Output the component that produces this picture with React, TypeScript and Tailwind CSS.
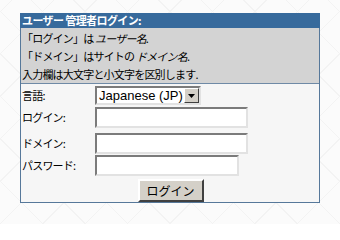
import React from "react";

const jp = "font-['MS_UI_Gothic','Noto_Sans_CJK_JP',sans-serif]";

const inset =
  "border-2 border-t-[#7b7b7b] border-l-[#7b7b7b] border-b-[#e2e2e2] border-r-[#e2e2e2] bg-white";

const Field = ({ label, width, mt }: { label: string; width: string; mt: string }) => (
  <div className={`flex items-center ${mt}`}>
    <label className="w-[73px] shrink-0 text-[11px] tracking-[-0.8px] leading-none text-black">{label}</label>
    <input type="text" className={`${inset} ${width} h-[21px] outline-none px-1 text-[12px]`} />
  </div>
);

const App = () => {
  return (
    <div
      className={`w-[340px] h-[224px] overflow-hidden bg-[#fbfbfb] bg-[repeating-linear-gradient(45deg,#f3f3f3_0px,#f3f3f3_1px,transparent_1px,transparent_30px),repeating-linear-gradient(-45deg,#f3f3f3_0px,#f3f3f3_1px,transparent_1px,transparent_30px)] pt-[13px] pl-[20px] ${jp}`}
    >
      <div className="w-[300px] border border-t-0 border-[#56789a]">
        <div className="h-[15px] -mx-px bg-[#376a9c] pl-[2px] text-[11px] tracking-[-0.6px] leading-[15px] font-bold text-white">
          ユーザー 管理者ログイン:
        </div>
        <div className="bg-[#d3d3d3] border-b border-[#6f8aa6] pl-px pt-px text-[11px] tracking-[-0.8px] leading-[18px] text-black">
          <p>
            「ログイン」は <i>ユーザー名</i>.
          </p>
          <p>
            「ドメイン」はサイトの <i>ドメイン名</i>.
          </p>
          <p>入力欄は大文字と小文字を区別します.</p>
        </div>
        <div className="bg-[#f6f6f6] pl-px pt-[1px] flex flex-col">
          <div className="flex items-center mt-[1px]">
            <span className="w-[73px] shrink-0 text-[11px] tracking-[-0.8px] leading-none text-black">言語:</span>
            <div className={`${inset} w-[106px] h-[19px] flex items-center`}>
              <span className="flex-1 pl-[2px] text-[13px] leading-none font-['Liberation_Sans',sans-serif] text-black">
                Japanese (JP)
              </span>
              <span className="w-[15px] h-[15px] bg-[#d4d0c8] border border-t-white border-l-white border-b-[#404040] border-r-[#404040] flex items-center justify-center">
                <svg width="7" height="4" viewBox="0 0 7 4">
                  <path d="M0 0h7L3.5 4z" fill="#000" />
                </svg>
              </span>
            </div>
          </div>
          <Field label="ログイン:" width="w-[153px]" mt="mt-[2px]" />
          <Field label="ドメイン:" width="w-[153px]" mt="mt-[5px]" />
          <Field label="パスワード:" width="w-[144px]" mt="mt-[1px]" />
          <div className="flex justify-center mt-[3px]">
            <button
              type="button"
              className="w-[66px] h-[23px] bg-[#d4d0c8] border-2 border-t-white border-l-white border-b-[#404040] border-r-[#404040] text-[12px] leading-none text-black"
            >
              ログイン
            </button>
          </div>
        </div>
      </div>
    </div>
  );
};

export default App;
